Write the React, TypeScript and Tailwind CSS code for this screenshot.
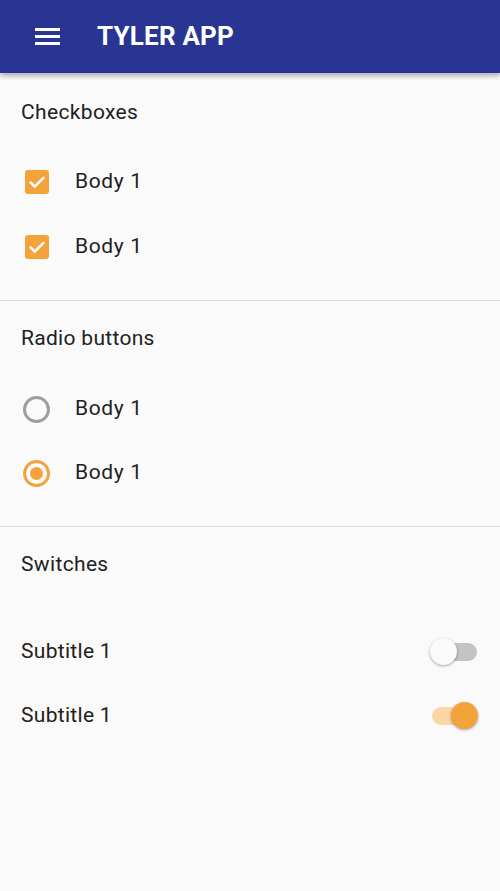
import React from "react";

function Checkbox() {
  return (
    <div className="w-[24px] h-[24px] rounded-[3px] bg-[#f4a33a] flex items-center justify-center">
      <svg width="22" height="22" viewBox="0 0 24 24">
        <path d="M5 12.5l4.5 4.5L19 7.5" fill="none" stroke="white" strokeWidth="2.8" strokeLinecap="round" strokeLinejoin="round" />
      </svg>
    </div>
  );
}

function Radio({ checked }: { checked: boolean }) {
  return (
    <div
      className={
        checked
          ? "w-[27px] h-[27px] rounded-full border-[3px] border-[#f4a33a] flex items-center justify-center"
          : "w-[27px] h-[27px] rounded-full border-[3px] border-[#9e9e9e]"
      }
    >
      {checked && <div className="w-[13px] h-[13px] rounded-full bg-[#f4a33a]" />}
    </div>
  );
}

function Switch({ on }: { on: boolean }) {
  return (
    <div className="relative w-[49px] h-[28px] flex items-center">
      <div className={on ? "ml-[2px] w-[45px] h-[18px] rounded-full bg-[#f9d6a3]" : "ml-[2px] w-[45px] h-[18px] rounded-full bg-[#c4c4c4]"} />
      <div
        className={
          on
            ? "absolute left-[21px] top-[0px] w-[27px] h-[27px] rounded-full bg-[#f4a33a] shadow-[0_1px_3px_rgba(0,0,0,0.35)]"
            : "absolute left-[0px] top-[0px] w-[27px] h-[27px] rounded-full bg-[#fafafa] shadow-[0_1px_3px_rgba(0,0,0,0.35)]"
        }
      />
    </div>
  );
}

export default function App() {
  return (
    <div className="w-[500px] h-[891px] bg-[#fafafa] text-[#212121] font-['Roboto',sans-serif] overflow-hidden">
      <header className="relative z-10 h-[73px] bg-[#283593] flex items-center shadow-[0_3px_5px_rgba(0,0,0,0.3)]">
        <div className="ml-[35px] w-[25px] flex flex-col gap-[4px]">
          <div className="h-[3px] bg-white" />
          <div className="h-[3px] bg-white" />
          <div className="h-[3px] bg-white" />
        </div>
        <div className="ml-[37px] text-white text-[26px] font-bold tracking-[0.2px]">TYLER APP</div>
      </header>

      <section className="pt-[23px] pb-[21px]">
        <div className="h-[34px] flex items-center px-[21px] text-[21px] tracking-[0.35px]">Checkboxes</div>
        <div className="mt-[20px] h-[64px] flex items-center pl-[25px]">
          <Checkbox />
          <span className="ml-[26px] text-[21px] tracking-[0.65px]">Body 1</span>
        </div>
        <div className="h-[65px] flex items-center pl-[25px]">
          <Checkbox />
          <span className="ml-[26px] text-[21px] tracking-[0.65px]">Body 1</span>
        </div>
      </section>
      <div className="h-px bg-[#dcdcdc]" />

      <section className="pt-[21px] pb-[21px]">
        <div className="h-[34px] flex items-center px-[21px] text-[21px] tracking-[0.3px]">Radio buttons</div>
        <div className="mt-[21px] h-[64px] flex items-center pl-[23px]">
          <Radio checked={false} />
          <span className="ml-[25px] text-[21px] tracking-[0.65px]">Body 1</span>
        </div>
        <div className="h-[64px] flex items-center pl-[23px]">
          <Radio checked={true} />
          <span className="ml-[25px] text-[21px] tracking-[0.65px]">Body 1</span>
        </div>
      </section>
      <div className="h-px bg-[#dcdcdc]" />

      <section className="pt-[21px]">
        <div className="h-[34px] flex items-center px-[21px] text-[21px] tracking-[0.35px]">Switches</div>
        <div className="mt-[38px] h-[64px] flex items-center justify-between pl-[21px] pr-[21px]">
          <span className="text-[21px] tracking-[0.3px]">Subtitle 1</span>
          <Switch on={false} />
        </div>
        <div className="h-[64px] flex items-center justify-between pl-[21px] pr-[21px]">
          <span className="text-[21px] tracking-[0.3px]">Subtitle 1</span>
          <Switch on={true} />
        </div>
      </section>
    </div>
  );
}
